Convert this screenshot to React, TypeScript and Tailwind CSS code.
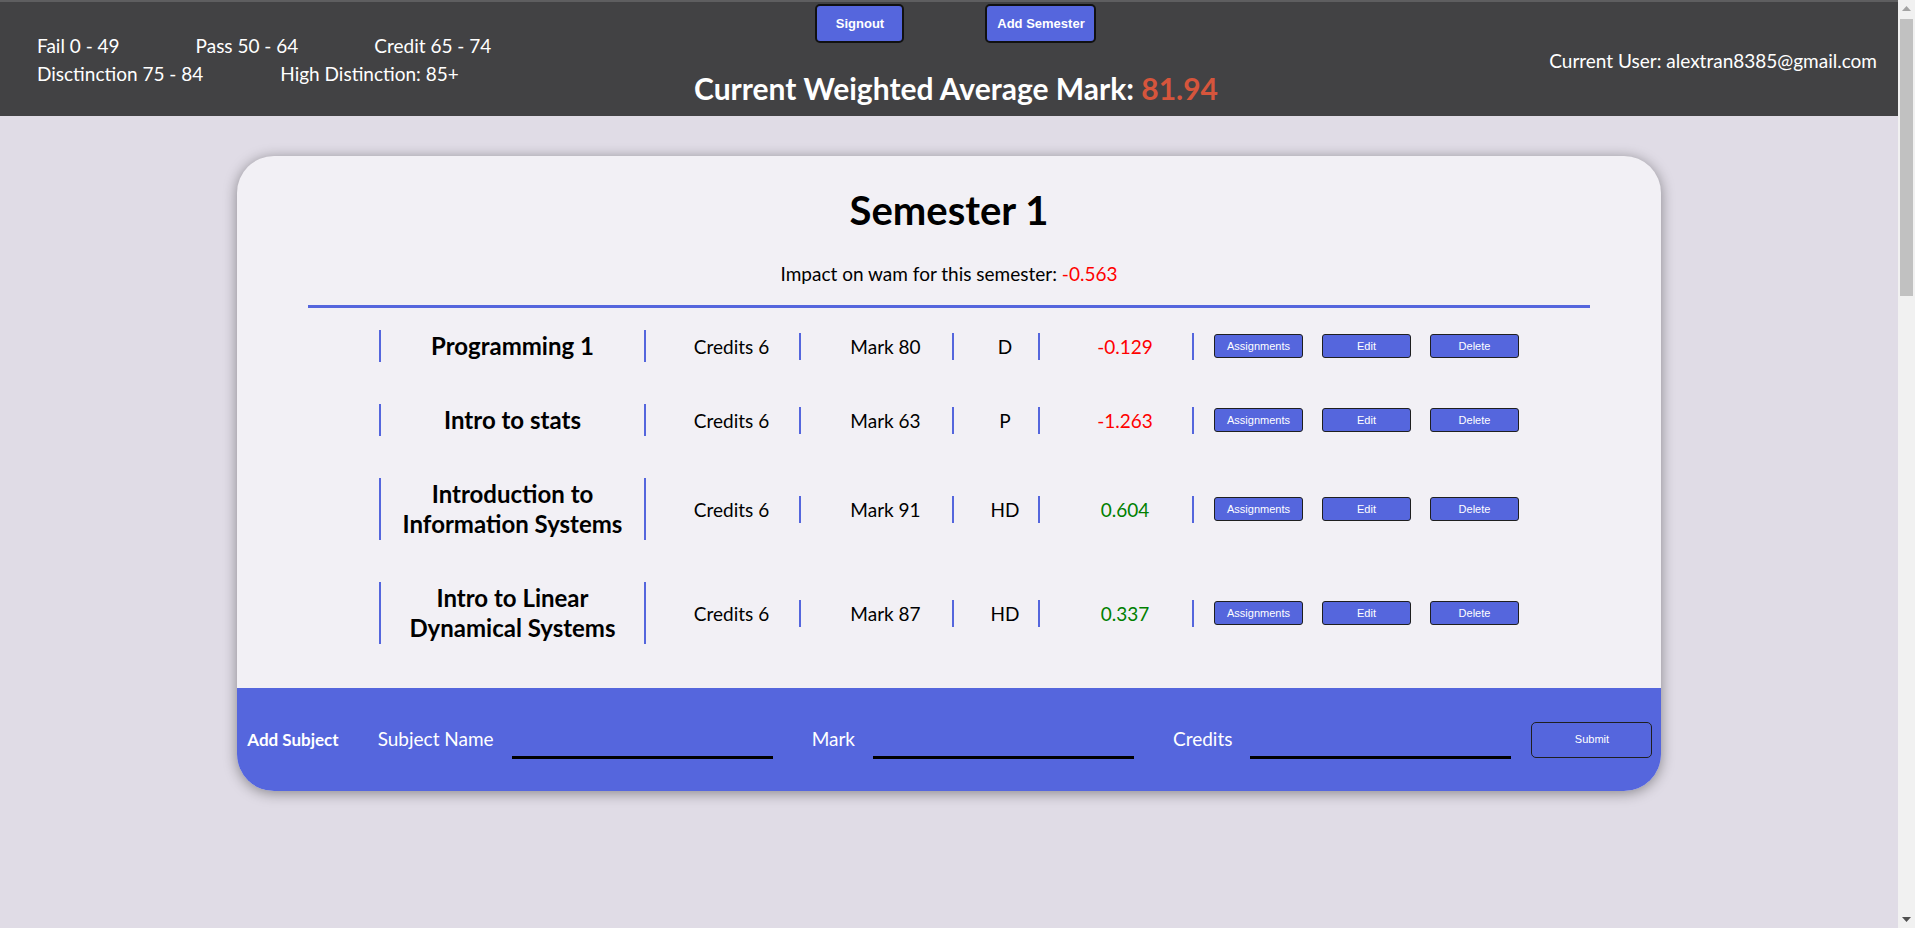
import React from 'react';

interface Subject {
  name: string;
  credits: number;
  mark: number;
  grade: string;
  impact: number;
}

const subjects: Subject[] = [
  { name: 'Programming 1', credits: 6, mark: 80, grade: 'D', impact: -0.129 },
  { name: 'Intro to stats', credits: 6, mark: 63, grade: 'P', impact: -1.263 },
  { name: 'Introduction to Information Systems', credits: 6, mark: 91, grade: 'HD', impact: 0.604 },
  { name: 'Intro to Linear Dynamical Systems', credits: 6, mark: 87, grade: 'HD', impact: 0.337 },
];

const font = { fontFamily: 'Lato, "Noto Sans", sans-serif' };

function SubjectRow({ subject }: { subject: Subject }) {
  return (
    <div className="flex items-center justify-center text-[19px] text-black">
      <div className="w-[267px] border-x-2 border-[#5566dd] px-[18px] py-[1px] text-center text-[24px] font-bold leading-[30px]">
        {subject.name}
      </div>
      <div className="w-[155px] border-r-2 border-[#5566dd] pl-[18px] text-center leading-[27px]">Credits {subject.credits}</div>
      <div className="w-[153px] border-r-2 border-[#5566dd] pl-[18px] text-center leading-[27px]">Mark {subject.mark}</div>
      <div className="w-[86px] border-r-2 border-[#5566dd] pl-[18px] text-center leading-[27px]">{subject.grade}</div>
      <div
        className={`w-[154px] border-r-2 border-[#5566dd] pl-[18px] text-center leading-[27px] ${
          subject.impact < 0 ? 'text-[#ff0000]' : 'text-[#008000]'
        }`}
      >
        {subject.impact}
      </div>
      <div className="ml-[20px] flex gap-[19px] font-['Liberation_Sans',Arial,sans-serif]">
        {['Assignments', 'Edit', 'Delete'].map((label) => (
          <button
            key={label}
            className="h-[24px] w-[89px] rounded-[3px] border border-[#1f1f1f] bg-[#5566dd] text-[11px] text-white"
          >
            {label}
          </button>
        ))}
      </div>
    </div>
  );
}

function InputGroup({ label }: { label: string }) {
  return (
    <div className="ml-[39px] flex min-w-0 items-center gap-[18px]">
      <span className="shrink-0 whitespace-nowrap text-[19px] text-white">{label}</span>
      <input className="h-[38px] w-[261px] min-w-0 shrink border-b-[3px] border-black bg-transparent outline-none" />
    </div>
  );
}

// page scrollbar as it appears in the screenshot
function Scrollbar() {
  return (
    <aside className="flex h-[928px] w-[17px] shrink-0 flex-col bg-[#f1f1f1]">
      <div className="flex h-[17px] items-center justify-center">
        <svg width="9" height="5" viewBox="0 0 9 5">
          <polygon points="4.5,0 9,5 0,5" fill="#a3a3a3" />
        </svg>
      </div>
      <div className="flex-1 px-[2px] pt-[2px]">
        <div className="h-[277px] bg-[#c1c1c1]" />
      </div>
      <div className="flex h-[17px] items-center justify-center">
        <svg width="9" height="5" viewBox="0 0 9 5">
          <polygon points="0,0 9,0 4.5,5" fill="#505050" />
        </svg>
      </div>
    </aside>
  );
}

export default function App() {
  return (
    <div className="flex h-[928px] overflow-hidden bg-[#e0dce6]" style={font}>
      <div className="min-w-0 flex-1">
        {/* Header */}
        <header className="grid h-[116px] grid-cols-3 border-t-2 border-[#5e5e60] bg-[#424244] text-white">
          <div className="pl-[37px] pt-[30px] text-[19px] leading-[28px]">
            <div className="flex gap-[76px]">
              <span>Fail 0 - 49</span>
              <span>Pass 50 - 64</span>
              <span>Credit 65 - 74</span>
            </div>
            <div className="flex gap-[77px]">
              <span>Disctinction 75 - 84</span>
              <span>High Distinction: 85+</span>
            </div>
          </div>

          <div className="flex flex-col items-center pl-[14px] pt-[2px]">
            <div className="flex gap-[81px] font-['Liberation_Sans',Arial,sans-serif]">
              <button className="h-[39px] w-[89px] rounded-[5px] border-2 border-[#111] bg-[#5566dd] text-[13px] font-bold text-white">
                Signout
              </button>
              <button className="h-[39px] w-[111px] rounded-[5px] border-2 border-[#111] bg-[#5566dd] text-[13px] font-bold text-white">
                Add Semester
              </button>
            </div>
            <h1 className="mt-[27px] whitespace-nowrap text-[30px] font-bold leading-[36px]">
              Current Weighted Average Mark: <span className="text-[#d6553c]">81.94</span>
            </h1>
          </div>

          <div className="flex justify-end pr-[21px] pt-[47px] text-[19px] leading-[24px]">
            Current User: alextran8385@gmail.com
          </div>
        </header>

        {/* Semester card */}
        <main className="flex justify-center pt-[40px]">
          <section className="w-3/4 overflow-hidden rounded-[37px] bg-[#f2f0f5] shadow-[0_2px_14px_rgba(0,0,0,0.4)]">
            <h2 className="pt-[28px] text-center text-[40px] font-bold leading-[52px] text-black">Semester 1</h2>
            <p className="mt-[24px] text-center text-[19px] leading-[27px] text-black">
              Impact on wam for this semester: <span className="text-[#ff0000]">-0.563</span>
            </p>
            <div className="mx-auto mt-[18px] h-[3px] w-[90%] bg-[#5566dd]" />

            <div className="flex flex-col gap-[42px] pb-[44px] pt-[22px]">
              {subjects.map((s) => (
                <SubjectRow key={s.name} subject={s} />
              ))}
            </div>

            {/* Add subject form */}
            <div className="flex h-[103px] items-center bg-[#5566dd] pl-[10px] pr-[8px]">
              <span className="shrink-0 whitespace-nowrap text-[17px] font-bold text-white">Add Subject</span>
              <InputGroup label="Subject Name" />
              <InputGroup label="Mark" />
              <InputGroup label="Credits" />
              <button className="ml-[20px] h-[36px] w-[121px] shrink-0 rounded-[5px] border border-[#1f1f1f] font-['Liberation_Sans',Arial,sans-serif] text-[11px] text-white">
                Submit
              </button>
            </div>
          </section>
        </main>
      </div>
      <Scrollbar />
    </div>
  );
}
